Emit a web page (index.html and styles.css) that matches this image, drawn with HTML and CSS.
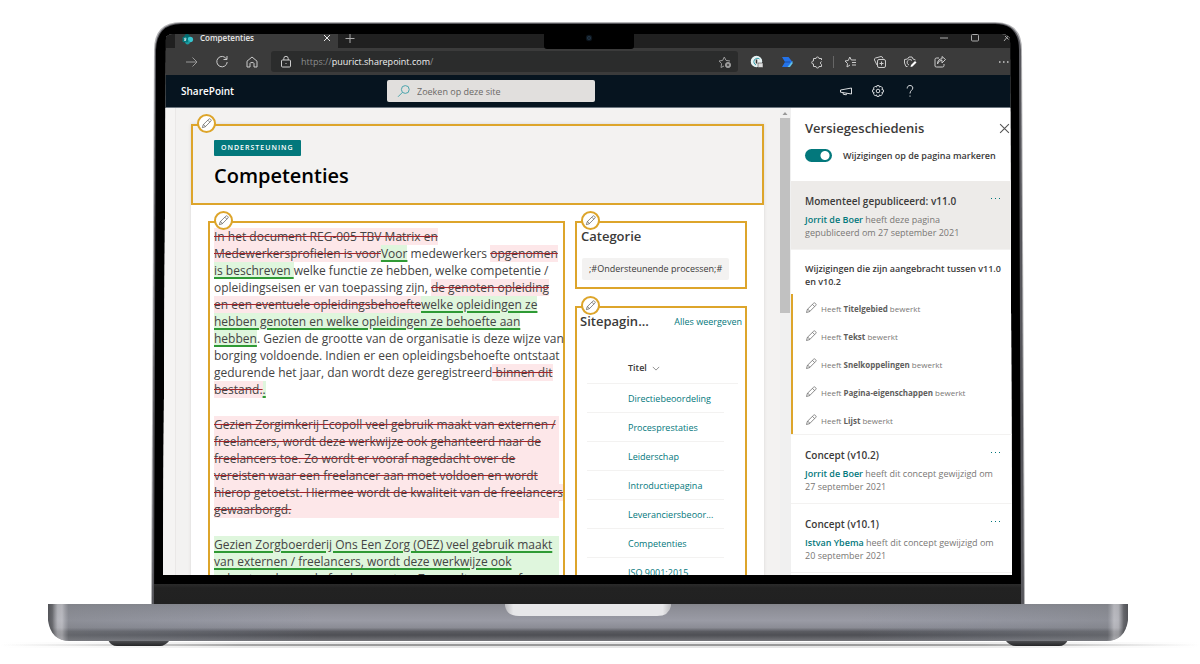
FILE: index.html
```
<!DOCTYPE html>
<html lang="nl">
<head>
<meta charset="utf-8">
<meta name="viewport" content="width=device-width, initial-scale=1">
<title>Competenties</title>
<link rel="stylesheet" href="styles.css">
</head>
<body>
<svg class="symbols" aria-hidden="true">
  <symbol id="pencil" viewBox="0 0 16 16"><path d="M2 14l1.200-4.200L11.400 1.700a1.600 1.600 0 0 1 2.300 0l.6.6a1.600 1.600 0 0 1 0 2.300L6.200 12.800zM10 3.200l2.800 2.800M3.200 9.800c1.600.2 2.700 1.300 3 3"/></symbol>
</svg>
<div class="stage">
  <div class="lid">
    <svg class="lid-shape" viewBox="0 0 874 582" preserveAspectRatio="none" aria-hidden="true">
      <defs>
        <linearGradient id="strip" x1="0" x2="0" y1="0" y2="1"><stop offset="0" stop-color="#2b2b2b"/><stop offset=".2" stop-color="#222"/><stop offset="1" stop-color="#212121"/></linearGradient>
      </defs>
      <path d="M0 582L3 28Q3 0 30 0H844Q871 0 871 28L874 582Z" fill="#b4b4b6"/>
      <path d="M1 582L4 28Q5 1 30 1H844Q869 1 870 28L873 582Z" fill="#57575c"/>
      <path d="M3 582L5 28Q6 2 30 2H844Q868 2 868 28L870 582Z" fill="#000"/>
      <path d="M3 562H870V582H3Z" fill="url(#strip)"/>
    </svg>
    <div class="screen">
      <div class="tabs">
        <div class="tab-edge"></div>
        <div class="tab">
          <svg class="favicon" viewBox="0 0 12 12" aria-hidden="true"><circle cx="5" cy="3" r="3" fill="#036c70"/><circle cx="8.500" cy="6" r="3" fill="#37c6d0"/><circle cx="5.500" cy="9" r="2.500" fill="#1a9ba1"/><rect x="0" y="3" width="6" height="6" rx="1" fill="#03787c"/><path d="M4.200 4.800Q2 4 2 5.200T3.800 6.200Q3.800 7.600 1.800 7" fill="none" stroke="#fff" stroke-width=".8"/></svg>
          <span class="tab-name">Competenties</span>
          <button class="plain" aria-label="Tabblad sluiten"><svg class="i8" viewBox="0 0 8 8"><path d="M1 1l6 6M7 1L1 7"/></svg></button>
        </div>
        <button class="plain new-tab" aria-label="Nieuw tabblad"><svg class="i10" viewBox="0 0 10 10"><path d="M5 0v9M.5 4.500h9"/></svg></button>
        <div class="window-buttons">
          <button class="plain" aria-label="Minimaliseren"><svg class="i8" viewBox="0 0 8 8"><path d="M0 4h8"/></svg></button>
          <button class="plain" aria-label="Maximaliseren"><svg class="i8" viewBox="0 0 8 8"><rect x=".5" y=".5" width="7" height="6.500" rx="1"/></svg></button>
          <button class="plain" aria-label="Sluiten"><svg class="i8" viewBox="0 0 8 8"><path d="M3 2l3.500 3.500M6.500 1.500L2 7"/></svg></button>
        </div>
      </div>
      <div class="toolbar">
        <button class="tool dim" aria-label="Volgende"><svg viewBox="0 0 14 14"><path d="M1 7h11M7.500 2.500L12 7l-4.500 4.500"/></svg></button>
        <button class="tool" aria-label="Vernieuwen"><svg viewBox="0 0 14 14"><path d="M11.500 4A5.200 5.200 0 1 0 12.200 7M12 1v3.500H8.500"/></svg></button>
        <button class="tool" aria-label="Start"><svg viewBox="0 0 14 14"><path d="M2 6.200L7 2l5 4.200V12H9V8.500Q9 7.500 7 7.500T5 8.500V12H2z"/></svg></button>
        <div class="address">
          <svg viewBox="0 0 14 14" aria-hidden="true"><rect x="2.500" y="5" width="9" height="7" rx="1"/><path d="M4.800 5V3.500a2.200 2.200 0 0 1 4.400 0V5M6.500 8.500h1"/></svg>
          <span class="url">https://<b>puurict.sharepoint.com</b>/</span>
          <button class="plain dim" aria-label="Favoriet toevoegen"><svg viewBox="0 0 14 14"><path d="M6 11l-3 1.500.6-3.800L1 6l3.700-.6L6.300 2 8 5.400l4 .6"/><circle cx="10" cy="10" r="2.600" fill="#aaa"/><path d="M8.700 10h2.600M10 8.700v2.600" stroke="#333"/></svg></button>
        </div>
        <button class="tool" aria-label="Wachtwoordbeheer"><svg viewBox="0 0 14 14"><circle cx="6.500" cy="6.500" r="5" fill="#eee" stroke="#e5f3f4" stroke-width="1.500"/><path d="M9.500 4A3.500 3.500 0 1 0 6 10" stroke="#269dab"/><path d="M6.500 4.500v4" stroke="#333" stroke-width="1.500"/><rect x="8" y="8" width="5" height="4.500" fill="#ddd" stroke="#333" stroke-width=".5"/></svg></button>
        <button class="tool" aria-label="Power Automate"><svg viewBox="0 0 14 14"><path d="M2 2h6.500l4 5-4 5H2l3-5z" fill="#2472e8" stroke="none"/><path d="M7.500 12L12.500 6v2.500L10 12z" fill="#63c3e6" stroke="none"/><path d="M5 7h5" stroke="#174eaa"/></svg></button>
        <button class="tool" aria-label="Extensies"><svg viewBox="0 0 14 14"><path d="M11.500 5V3.500H9a1.500 1.500 0 0 0-3 0H3.500V6a1.500 1.500 0 0 0-.5 3h.5v2.500H6a1.500 1.500 0 0 0 3 0h2.500V9.500a1.600 1.600 0 0 1 0-3"/></svg></button>
        <span class="divider"></span>
        <button class="tool" aria-label="Favorieten"><svg viewBox="0 0 14 14"><path d="M7 10L4 12l.5-3.500L2 6l3.300-.5L6.800 2l1.500 3H13M9 7.500h4M9 10h4"/></svg></button>
        <button class="tool" aria-label="Verzamelingen"><svg viewBox="0 0 14 14"><rect x="4.500" y="4.500" width="8" height="8" rx="1.500"/><path d="M4 10L1.500 5q-.5-1.500 1-2L8 1.500q1.500 0 2 2M8.500 6.500v4M6.500 8.500h4"/></svg></button>
        <button class="tool" aria-label="Schermopname"><svg viewBox="0 0 14 14"><path d="M4.500 11.500H3L1.500 8V4.500L4.500 4 6 2h3l1 2 2.500 1M9 5.500A2.800 2.800 0 1 0 6 10"/><path d="M7.500 12l.5-2 4-4 1.500 1.500-4 4z" fill="#fff" stroke="none"/></svg></button>
        <button class="tool" aria-label="Delen"><svg viewBox="0 0 14 14"><path d="M6 3H3.500Q2 3 2 4.500V11q0 1 1.500 1h6Q11 12 11 10.500V9M4.500 9Q5 5.500 9 5.200V8l3.500-3.500L9 1.500v2.300Q4.500 4 4.500 9"/></svg></button>
        <button class="tool more" aria-label="Meer"><svg viewBox="0 0 14 14"><path d="M3 7h1.500M7 7h1.500M11 7h1.500" stroke-width="1.500"/></svg></button>
      </div>
      <header class="suite">
        <a class="brand" href="#">SharePoint</a>
        <label class="search">
          <svg viewBox="0 0 14 14" aria-hidden="true"><circle cx="8.300" cy="5.500" r="3.900"/><path d="M5.500 8.300L1 12.800"/></svg>
          <input type="search" placeholder="Zoeken op deze site" aria-label="Zoeken op deze site">
        </label>
        <div class="suite-actions">
          <button class="plain" aria-label="Megafoon"><svg viewBox="0 0 14 14"><path d="M1.500 6L12.500 4v6L1.500 8.200zM4 8.500l.3 1.800 3 .5.5-1.500"/></svg></button>
          <button class="plain" aria-label="Instellingen"><svg viewBox="0 0 14 14"><circle cx="7" cy="7" r="1.800"/><path d="M5.900 1.600h2.200l.4 1.500 1.400-.8 1.700 1.700-.8 1.400 1.600.5v2.200l-1.600.5.8 1.400-1.700 1.700-1.400-.8-.4 1.500H5.900l-.4-1.500-1.400.8L2.400 10l.8-1.400-1.600-.5V5.900l1.600-.5L2.400 4l1.700-1.700 1.400.8z"/></svg></button>
          <button class="plain" aria-label="Help"><svg viewBox="0 0 14 14"><path d="M4.200 4.500C4.200 2.500 5.300 1.500 7 1.500s2.800 1 2.800 2.500c0 2.200-2.800 2.500-2.800 5.500M7 11.500v1.200"/></svg></button>
        </div>
      </header>
      <div class="content">
        <div class="rail"></div>
        <main class="page">
          <div class="canvas">
            <section class="marked hero">
              <span class="badge"><svg><use href="#pencil"/></svg></span>
              <span class="topic">ONDERSTEUNING</span>
              <h1>Competenties</h1>
            </section>
            <div class="columns">
              <section class="marked text">
                <span class="badge"><svg><use href="#pencil"/></svg></span>
                <p><del>In het document REG-005 TBV Matrix en<br>Medewerkersprofielen is voor</del><ins>Voor</ins> medewerkers <del>opgenomen</del><br><ins>is beschreven </ins>welke functie ze hebben, welke competentie /<br>opleidingseisen er van toepassing zijn, <del>de genoten opleiding<br>en een eventuele opleidingsbehoefte</del><ins>welke opleidingen ze<br>hebben genoten en welke opleidingen ze behoefte aan<br>hebben</ins>. Gezien de grootte van de organisatie is deze wijze van<br>borging voldoende. Indien er een opleidingsbehoefte ontstaat<br>gedurende het jaar, dan wordt deze geregistreerd<del> binnen dit<br>bestand.</del><ins>.</ins></p>
                <p class="removed"><del>Gezien Zorgimkerij Ecopoll veel gebruik maakt van externen /<br>freelancers, wordt deze werkwijze ook gehanteerd naar de<br>freelancers toe. Zo wordt er vooraf nagedacht over de<br>vereisten waar een freelancer aan moet voldoen en wordt<br>hierop getoetst. Hiermee wordt de kwaliteit van de freelancers<br>gewaarborgd.</del></p>
                <p class="added"><ins>Gezien Zorgboerderij Ons Een Zorg (OEZ) veel gebruik maakt<br>van externen / freelancers, wordt deze werkwijze ook<br>gehanteerd naar de freelancers toe. Zo wordt er vooraf</ins></p>
              </section>
              <div class="side">
                <section class="marked category">
                  <span class="badge"><svg><use href="#pencil"/></svg></span>
                  <h2>Categorie</h2>
                  <span class="chip">;#Ondersteunende processen;#</span>
                </section>
                <section class="marked list">
                  <span class="badge"><svg><use href="#pencil"/></svg></span>
                  <div class="list-head"><h2>Sitepagin...</h2><a href="#">Alles weergeven</a></div>
                  <table>
                    <thead><tr><th>Titel <svg class="chevron" viewBox="0 0 10 6"><path d="M1 1l4 4 4-4"/></svg></th><td class="gutter"></td></tr></thead>
                    <tbody>
                      <tr><td><a href="#">Directiebeoordeling</a></td></tr>
                      <tr><td><a href="#">Procesprestaties</a></td></tr>
                      <tr><td><a href="#">Leiderschap</a></td></tr>
                      <tr><td><a href="#">Introductiepagina</a></td></tr>
                      <tr><td><a href="#">Leveranciersbeoor...</a></td></tr>
                      <tr><td><a href="#">Competenties</a></td></tr>
                      <tr><td><a href="#">ISO 9001:2015</a></td></tr>
                    </tbody>
                  </table>
                </section>
              </div>
            </div>
          </div>
        </main>
        <div class="scrollbar" aria-hidden="true"><svg viewBox="0 0 10 10"><path d="M2.500 7L5 4l2.500 3z"/></svg><div class="thumb"></div></div>
        <aside class="panel">
          <div class="panel-head">
            <div class="panel-title"><h2>Versiegeschiedenis</h2>
            <button class="plain" aria-label="Deelvenster sluiten"><svg viewBox="0 0 10 10"><path d="M1 1l8 8M9 1L1 9"/></svg></button></div>
            <div class="switch"><input type="checkbox" role="switch" id="mark" checked><label for="mark">Wijzigingen op de pagina markeren</label></div>
          </div>
          <article class="version current">
            <div class="version-head"><h3>Momenteel gepubliceerd: v11.0</h3><button class="plain dots" aria-label="Meer opties"><i></i><i></i><i></i></button></div>
            <p><a href="#">Jorrit de Boer</a> heeft deze pagina<br>gepubliceerd om 27 september 2021</p>
          </article>
          <div class="changes">
            <h4>Wijzigingen die zijn aangebracht tussen v11.0<br>en v10.2</h4>
            <ul>
              <li><svg><use href="#pencil"/></svg><span>Heeft <b>Titelgebied</b> bewerkt</span></li>
              <li><svg><use href="#pencil"/></svg><span>Heeft <b>Tekst</b> bewerkt</span></li>
              <li><svg><use href="#pencil"/></svg><span>Heeft <b>Snelkoppelingen</b> bewerkt</span></li>
              <li><svg><use href="#pencil"/></svg><span>Heeft <b>Pagina-eigenschappen</b> bewerkt</span></li>
              <li><svg><use href="#pencil"/></svg><span>Heeft <b>Lijst</b> bewerkt</span></li>
            </ul>
          </div>
          <article class="version">
            <div class="version-head"><h3>Concept (v10.2)</h3><button class="plain dots" aria-label="Meer opties"><i></i><i></i><i></i></button></div>
            <p><a href="#">Jorrit de Boer</a> heeft dit concept gewijzigd om<br>27 september 2021</p>
          </article>
          <article class="version">
            <div class="version-head"><h3>Concept (v10.1)</h3><button class="plain dots" aria-label="Meer opties"><i></i><i></i><i></i></button></div>
            <p><a href="#">Istvan Ybema</a> heeft dit concept gewijzigd om<br>20 september 2021</p>
          </article>
        </aside>
      </div>
    </div>
    <div class="notch"><svg viewBox="0 0 8 8" aria-hidden="true"><circle cx="4" cy="4" r="3.200" fill="#0c141c"/><circle cx="4" cy="4" r="2" fill="#233647"/><circle cx="4" cy="4" r=".8" fill="#0a0f14"/></svg></div>
  </div>
  <svg class="base" viewBox="0 0 1200 60" aria-hidden="true">
    <defs>
      <linearGradient id="metal" x1="0" x2="0" y1="0" y2="1">
        <stop offset="0" stop-color="#85868c"/><stop offset=".08" stop-color="#8b8c94"/><stop offset=".45" stop-color="#9a9ba5"/><stop offset=".64" stop-color="#8b8c95"/><stop offset=".74" stop-color="#5b5c62"/><stop offset=".84" stop-color="#4e4f54"/><stop offset=".94" stop-color="#66676c"/><stop offset="1" stop-color="#77777b"/>
      </linearGradient>
      <linearGradient id="sides" x1="0" x2="1" y1="0" y2="0">
        <stop offset="0" stop-color="#3e3f42"/><stop offset=".004" stop-color="#5a5b5e"/><stop offset=".009" stop-color="#c8c8cc" stop-opacity=".8"/><stop offset=".013" stop-color="#d0d0d4" stop-opacity=".8"/><stop offset=".019" stop-color="#7d8086" stop-opacity=".6"/><stop offset=".25" stop-color="#808898" stop-opacity="0"/><stop offset=".75" stop-color="#808898" stop-opacity="0"/><stop offset=".981" stop-color="#7d8086" stop-opacity=".6"/><stop offset=".987" stop-color="#d0d0d4" stop-opacity=".8"/><stop offset=".991" stop-color="#c8c8cc" stop-opacity=".8"/><stop offset=".996" stop-color="#55565a"/><stop offset="1" stop-color="#3e3f42"/>
      </linearGradient>
      <linearGradient id="ground" x1="0" x2="1" y1="0" y2="0">
        <stop offset="0" stop-color="#aaa" stop-opacity="0"/><stop offset=".2" stop-color="#888" stop-opacity=".7"/><stop offset=".35" stop-color="#999"/><stop offset=".65" stop-color="#999"/><stop offset=".82" stop-color="#888" stop-opacity=".7"/><stop offset="1" stop-color="#aaa" stop-opacity="0"/>
      </linearGradient>
      <linearGradient id="scoop" x1="0" x2="1" y1="0" y2="0"><stop offset="0" stop-color="#bcbcbf"/><stop offset=".05" stop-color="#e7e7e9"/><stop offset=".95" stop-color="#e7e7e9"/><stop offset="1" stop-color="#bcbcbf"/></linearGradient>
      <linearGradient id="foot" x1="0" x2="0" y1="0" y2="1"><stop offset="0" stop-color="#55565a"/><stop offset="1" stop-color="#242527"/></linearGradient>
    </defs>
    <rect y="38" width="1200" height="6" fill="url(#ground)" opacity=".25"/>
    <rect y="40" width="1200" height="2" fill="url(#ground)"/>
    <path d="M108 36H170Q165 42 160 42H117Q111 42 108 36ZM1005 36H1068Q1065 42 1059 42H1016Q1010 42 1005 36Z" fill="url(#foot)"/>
    <path d="M48 0H1128V16Q1125 37 1106 37H70Q51 37 48 16Z" fill="url(#metal)"/>
    <path d="M48 0H1128V16Q1125 37 1106 37H70Q51 37 48 16Z" fill="url(#sides)" opacity=".75"/>
    <path d="M505 0H671V2Q669 12 657 12H519Q507 12 505 2Z" fill="url(#scoop)"/>
  </svg>
</div>
</body>
</html>
```
FILE: styles.css
```
* { box-sizing: border-box; }
body { margin: 0; background: #fff; color: #3b3a39; font-family: "Open Sans", "Noto Sans", sans-serif; font-size: 10px; overflow-x: hidden; }
h1, h2, h3, h4, p, ul { margin: 0; padding: 0; }
a { color: #03787c; text-decoration: none; }
svg { display: block; width: 14px; height: 14px; fill: none; stroke: currentColor; stroke-width: 1; flex: none; }
.symbols { position: absolute; width: 0; height: 0; }
.plain, .tool { display: flex; align-items: center; justify-content: center; padding: 0; border: 0; background: none; color: inherit; font: inherit; }

/* Laptop */
.stage { display: grid; grid-template-columns: 151fr 874fr 175fr; padding-top: 22px; }
.lid { grid-column: 2; position: relative; padding: 12px 13px 29px 12px; }
.lid-shape { position: absolute; inset: 0; width: 100%; height: 100%; stroke: none; }
.screen { position: relative; display: flex; flex-direction: column; aspect-ratio: 849 / 541; overflow: hidden; border-radius: 10px 10px 0 0; clip-path: polygon(3px 0, calc(100% - 2px) 0, 100% 100%, 0 100%); background: #fff; }
.notch { position: absolute; top: 12px; left: 45%; width: 90px; height: 15px; display: flex; justify-content: center; background: #000; border-radius: 0 0 3px 3px; }
.notch svg { width: 8px; height: 8px; stroke: none; }
.base { grid-column: 1 / -1; width: 100%; height: auto; stroke: none; }

/* Browser */
.tabs { display: flex; height: 14px; flex: none; background: #202020; color: #e8e8e8; }
.tab-edge { width: 12px; background: #202020; border-radius: 0 0 3px 0; }
.tab { display: flex; align-items: flex-start; gap: 6px; width: 163px; padding: 0 7px 0 7px; background: #3b3b3b; }
.tab .favicon { width: 12px; height: 11px; stroke: none; }
.tab-name { flex: 1; font-size: 8px; line-height: 8px; font-weight: 600; }
.i8 { width: 8px; height: 8px; }
.i10 { width: 10px; height: 10px; }
.new-tab { align-items: flex-start; width: 24px; color: #aaa; }
.window-buttons { display: flex; align-items: flex-start; gap: 23px; margin-left: auto; padding-right: 2px; color: #aaa; }
.toolbar { display: flex; align-items: center; height: 27px; flex: none; padding-left: 14px; background: #3b3b3b; color: #ccc; }
.tool { width: 30px; flex: none; }
.tool.more { width: 18px; margin-left: 39px; }
.dim { color: #999; }
.address { flex: 1; display: flex; align-items: center; gap: 8px; height: 21px; margin: 0 4px; padding: 0 6px 0 8px; border-radius: 3px; background: #2b2c2c; }
.url { flex: 1; color: #8c8c8c; font-size: 9px; }
.url b { color: #f0f0f0; font-weight: 400; }
.divider { width: 1px; height: 12px; margin: 0 1px; background: #666; }

/* Suite bar */
.suite { display: flex; align-items: center; height: 33px; flex: none; padding: 0 86px 0 18px; background: #06141f; color: #fff; border-bottom: 1px solid #6d7780; }
.brand { width: 206px; color: #fff; font-size: 10px; font-weight: 600; }
.search { display: flex; align-items: center; gap: 6px; width: 208px; height: 22px; padding: 0 10px; border-radius: 2px; background: #e1dfdd; color: #4ba5ad; }
.search input { flex: 1; min-width: 0; padding: 0; border: 0; outline: 0; background: none; font: inherit; font-size: 9px; }
.search input::placeholder { color: #6b6967; opacity: 1; }
.suite-actions { display: flex; margin-left: auto; color: #d8dbdd; }
.suite-actions .plain { width: 32px; }

/* Page */
.content { flex: 1; min-height: 0; display: flex; background: #f3f2f1; overflow: hidden; }
.rail { width: 13px; flex: none; background: #f5f4f3; border-right: 1px solid #eae8e7; }
.page { flex: 1; min-width: 0; padding: 16px 16px 0 15px; }
.canvas { min-height: 500px; background: #fff; box-shadow: 0 0 3px #d8d6d4; }
.marked { position: relative; border: 2px solid #dda52b; }
.badge { position: absolute; top: -12px; left: 4px; display: grid; place-items: center; width: 19px; height: 19px; border: 2px solid #dda52b; border-radius: 50%; background: #fff; color: #555; }
.badge svg { width: 11px; height: 11px; stroke-width: 1; }
.hero { height: 81px; padding: 14px 21px; background: #f3f2f1; }
.topic { display: inline-block; padding: 0 7px; border-radius: 1px; background: #03787c; color: #fff; font-size: 7px; line-height: 16px; font-weight: 600; letter-spacing: 1px; vertical-align: top; }
h1 { margin-top: 5px; color: #000; font-size: 20px; line-height: 30px; font-weight: 600; }
.columns { display: grid; grid-template-columns: minmax(0, 357fr) minmax(0, 172fr); gap: 10px; padding: 16px 17px; }
.text { padding: 5px 4px; color: #444; font-size: 12px; line-height: 17px; white-space: nowrap; }
.text p { margin-bottom: 18px; }
del { background: #fde7e9; text-decoration: line-through 1px #a4262c; }
ins { background: #dff6dd; text-decoration: underline 2px #2f9a35; text-underline-offset: 2px; }
.removed { background: #fde7e9; }
.added { background: #dff6dd; }
.side { display: flex; flex-direction: column; gap: 17px; min-width: 0; }
h2 { font-size: 13px; line-height: 17px; font-weight: 600; }
.category { height: 68px; padding: 5px 4px; }
.chip { display: inline-block; margin: 13px 0 0 1px; padding: 0 7px; border-radius: 2px; background: #f3f2f1; font-size: 9px; line-height: 22px; }
.list { flex: 1; padding: 5px 3px; }
.list-head { display: flex; align-items: center; justify-content: space-between; }
.list-head a { font-size: 9px; }
table { width: 151px; margin: 25px 0 0 7px; border-spacing: 0; font-size: 9px; }
th, td { padding: 0 0 0 41px; text-align: left; font-weight: 400; height: 29px; border-bottom: 1px solid #f3f2f1; }
th { padding-bottom: 4px; font-weight: 600; }
thead .gutter { width: 14px; padding: 0; }
.chevron { display: inline-block; width: 8px; height: 5px; margin-left: 3px; color: #777; }
.scrollbar { width: 11px; flex: none; padding-right: 1px; background: #f0f0f0; }
.scrollbar svg { width: 10px; height: 10px; fill: #999; stroke: none; }
.thumb { height: 195px; background: #c1c1c1; }

/* Version panel */
.panel { width: 221px; flex: none; background: #fff; }
.panel-head { height: 73px; padding: 12px 2px 0 14px; }
.panel-title { display: flex; align-items: center; justify-content: space-between; }
.panel-title svg { width: 11px; height: 11px; color: #555; }
.switch { display: flex; align-items: center; gap: 11px; margin-top: 12px; font-size: 9px; font-weight: 600; }
.switch input { appearance: none; width: 27px; height: 13px; margin: 0; border-radius: 7px; background: radial-gradient(circle at 20px 50%, #fff 4px, #03787c 5px); }
.version { padding: 12px 12px 10px 14px; border-bottom: 1px solid #f3f2f1; }
.current { background: #edebe9; }
.version-head { display: flex; justify-content: space-between; margin-bottom: 3px; }
h3 { font-size: 10px; line-height: 17px; font-weight: 600; }
.dots { gap: 3px; height: 10px; align-self: flex-start; }
.dots i { width: 1px; height: 1px; background: #03787c; }
.version p { color: #797775; font-size: 9px; line-height: 13px; }
.version a { font-weight: 600; }
.changes { padding-top: 12px; border-bottom: 1px solid #f3f2f1; }
h4 { padding-left: 14px; font-size: 9px; line-height: 13px; font-weight: 600; }
.changes ul { margin-top: 6px; border-left: 2px solid #dda52b; list-style: none; }
.changes li { display: flex; align-items: center; gap: 4px; height: 28px; padding-left: 12px; color: #797775; font-size: 8px; }
.changes li svg { width: 12px; height: 12px; color: #666; }
.changes b { color: #605e5c; font-weight: 700; }
```
